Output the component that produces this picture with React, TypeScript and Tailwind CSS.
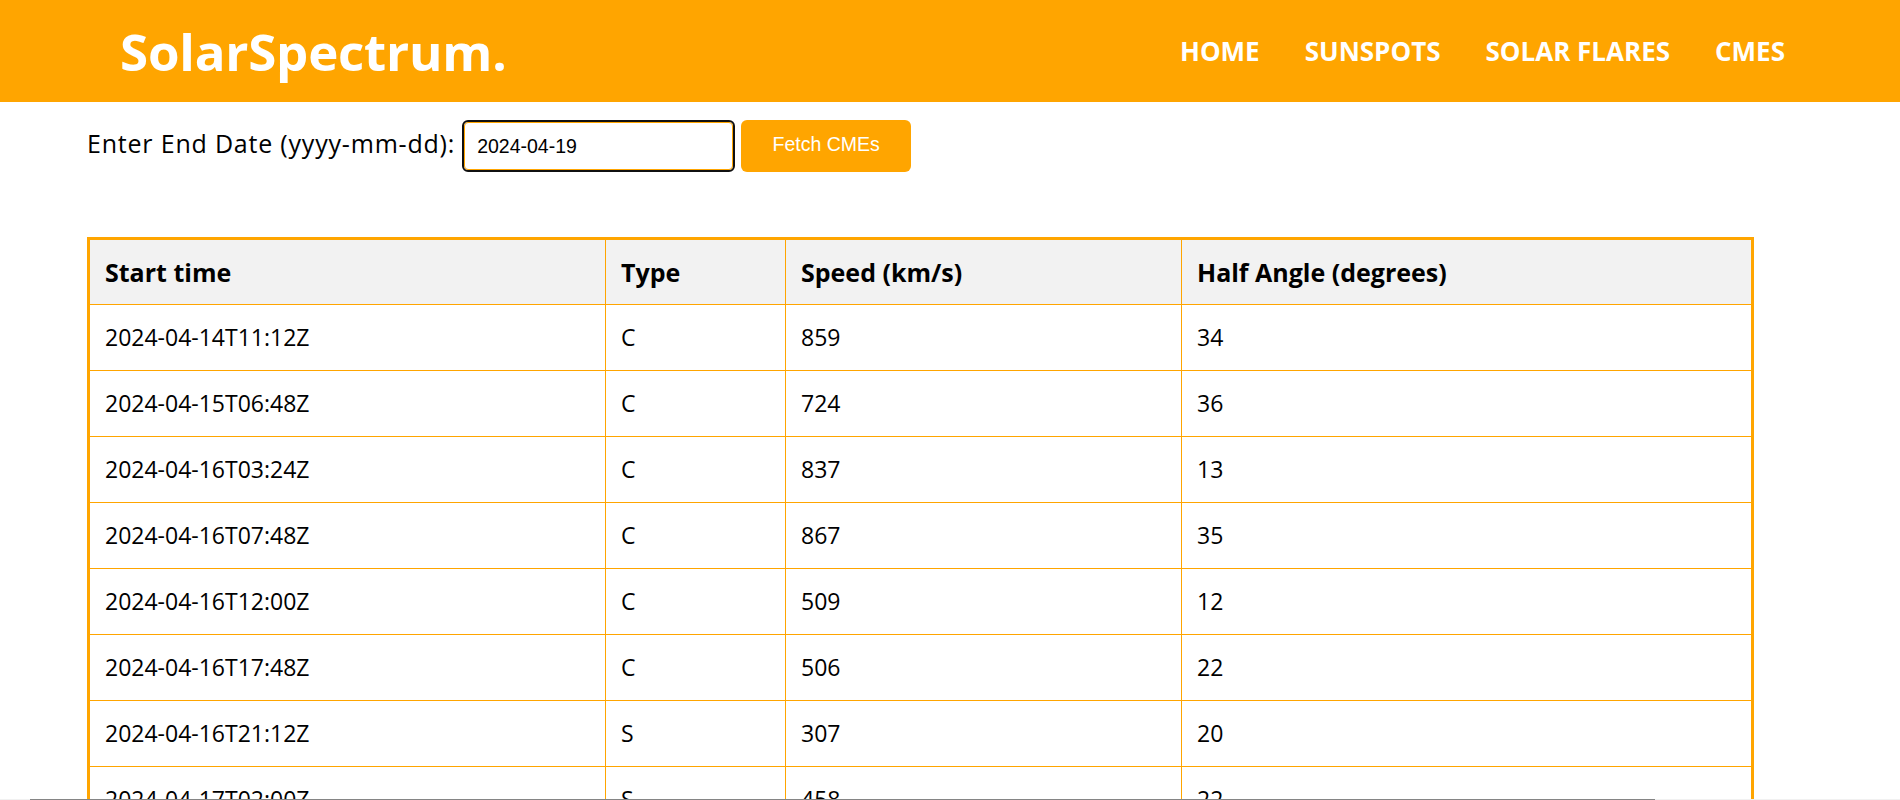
import React from "react";

const rows: [string, string, string, string][] = [
  ["2024-04-14T11:12Z", "C", "859", "34"],
  ["2024-04-15T06:48Z", "C", "724", "36"],
  ["2024-04-16T03:24Z", "C", "837", "13"],
  ["2024-04-16T07:48Z", "C", "867", "35"],
  ["2024-04-16T12:00Z", "C", "509", "12"],
  ["2024-04-16T17:48Z", "C", "506", "22"],
  ["2024-04-16T21:12Z", "S", "307", "20"],
  ["2024-04-17T02:00Z", "S", "458", "22"],
  ["2024-04-17T10:36Z", "C", "612", "28"],
  ["2024-04-18T04:12Z", "S", "385", "17"],
];

export default function App() {
  return (
    <div className="relative h-[800px] overflow-hidden bg-white text-black font-['Open_Sans',sans-serif]">
      <header className="flex h-[102px] items-center justify-between bg-[#FFA500] pl-[120px] pr-[115px] text-white">
        <div className="text-[51px] font-bold leading-none tracking-[-0.2px]">SolarSpectrum.</div>
        <nav className="flex gap-[45px] text-[26px] font-bold leading-none">
          <span>HOME</span>
          <span>SUNSPOTS</span>
          <span>SOLAR FLARES</span>
          <span>CMES</span>
        </nav>
      </header>

      <main className="pl-[87px]">
        <div className="mt-[18px] flex h-[52px] items-center">
          <label className="mb-[6px] text-[25px] leading-none tracking-[0.8px]">Enter End Date (yyyy-mm-dd):</label>
          <input
            type="text"
            defaultValue="2024-04-19"
            className="ml-[9px] h-[48px] w-[269px] rounded-[4px] border border-[#FFA500] px-3 font-['Liberation_Sans',Arial,sans-serif] text-[19.5px] text-black outline-2 outline-solid outline-[#101010]"
          />
          <button className="ml-[8px] h-[52px] w-[170px] rounded-[6px] bg-[#FFA500] pb-[3px] font-['Liberation_Sans',Arial,sans-serif] text-[19.5px] text-white">
            Fetch CMEs
          </button>
        </div>

        <table className="mt-[65px] w-[1664px] table-fixed border-collapse border-[3px] border-[#FFA500]">
          <colgroup>
            <col className="w-[517px]" />
            <col className="w-[180px]" />
            <col className="w-[396px]" />
            <col className="w-[571px]" />
          </colgroup>
          <thead>
            <tr className="bg-[#F2F2F2]">
              {["Start time", "Type", "Speed (km/s)", "Half Angle (degrees)"].map((h) => (
                <th
                  key={h}
                  className="h-[66px] border border-[#FFA500] px-[15px] text-left align-middle text-[25px] font-bold leading-none"
                >
                  {h}
                </th>
              ))}
            </tr>
          </thead>
          <tbody>
            {rows.map((r, i) => (
              <tr key={i}>
                {r.map((c, j) => (
                  <td
                    key={j}
                    className="h-[66px] border border-[#FFA500] px-[15px] text-left align-middle text-[23px] leading-none"
                  >
                    {c}
                  </td>
                ))}
              </tr>
            ))}
          </tbody>
        </table>
      </main>

      <div className="absolute bottom-0 left-0 h-px w-full bg-[#f1f1f1]">
        <div className="ml-[30px] h-full w-[1625px] bg-[#858585]" />
      </div>
    </div>
  );
}
